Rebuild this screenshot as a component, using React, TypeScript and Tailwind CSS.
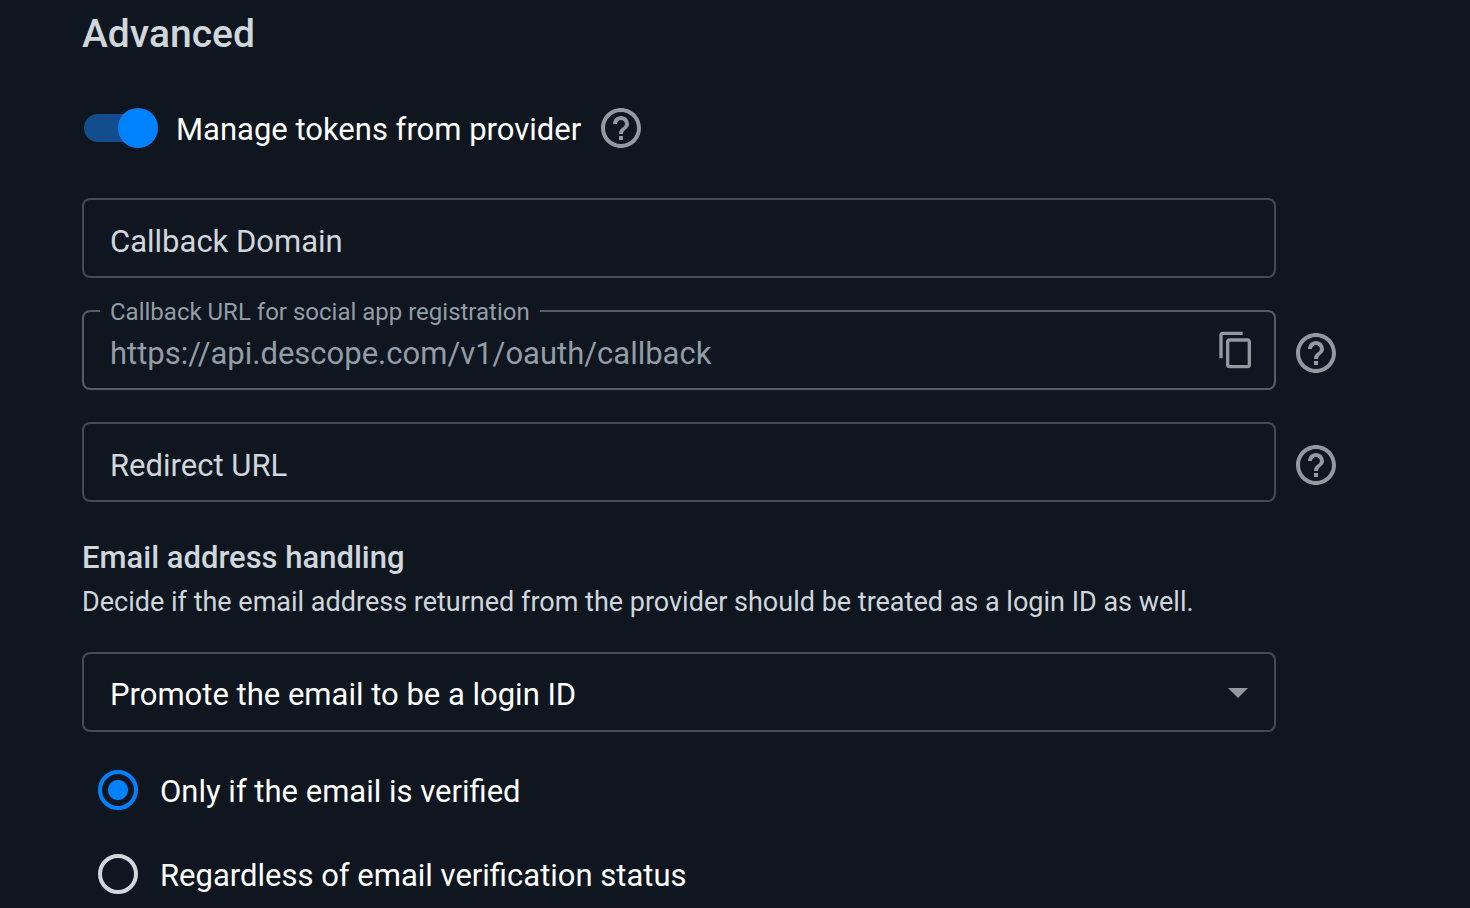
import type { ReactNode } from 'react'
import { MdArrowDropDown, MdContentCopy, MdHelpOutline } from 'react-icons/md'

const fieldClass =
  'block h-20 w-full rounded-lg border-2 bg-transparent px-[26px] pt-1.5 text-[31px] outline-none focus:border-[#0082ff]'

const radioClass =
  'size-10 shrink-0 appearance-none rounded-full border-4 border-[#cfd6dc] checked:border-[#0082ff] checked:bg-[radial-gradient(circle,#0082ff_9.5px,transparent_10.5px)]'

const HelpButton = ({ label }: { label: string }) => (
  <button type="button" aria-label={label} className="shrink-0 text-[#94989f]">
    <MdHelpOutline className="size-12" />
  </button>
)

const FieldRow = ({ children, help }: { children: ReactNode; help?: string }) => (
  <div className="flex items-center gap-4">
    <div className="relative flex-1">{children}</div>
    <div className="flex w-12 shrink-0 pt-1.5">{help && <HelpButton label={help} />}</div>
  </div>
)

const RadioOption = ({ label, checked }: { label: string; checked?: boolean }) => (
  <label className="flex items-center gap-[22px]">
    <input type="radio" name="verification" defaultChecked={checked} className={radioClass} />
    <span className="pt-1 text-[31px] leading-11">{label}</span>
  </label>
)

const App = () => (
  <main className="min-h-screen bg-[#0f1620] pt-2.5 pr-[130px] pl-[82px] font-['Roboto',sans-serif] text-white">
    <h1 className="text-[39px] leading-12 font-medium text-[#cfd6dc]">Advanced</h1>

    <div className="mt-[46px] flex items-center">
      <label className="flex items-center gap-[18px] pl-0.5">
        <input
          type="checkbox"
          role="switch"
          defaultChecked
          className="relative h-7 w-[74px] shrink-0 appearance-none before:absolute before:inset-y-0 before:left-0 before:w-[68px] before:rounded-full before:bg-[#454a54] after:absolute after:-top-1.5 after:left-0 after:size-10 after:rounded-full after:bg-[#cfd6dc] checked:before:bg-[#144d8e] checked:after:left-[34px] checked:after:bg-[#0082ff]"
        />
        <span className="pt-1 text-[31px] leading-11">Manage tokens from provider</span>
      </label>
      <div className="ml-4 flex">
        <HelpButton label="About provider tokens" />
      </div>
    </div>

    <div className="mt-[46px] flex flex-col gap-8">
      <FieldRow>
        <input
          type="text"
          aria-label="Callback Domain"
          placeholder="Callback Domain"
          className={`${fieldClass} border-[#454a54] placeholder:text-[#cfd6dc]`}
        />
      </FieldRow>
      <FieldRow help="About the callback URL">
        <label
          htmlFor="callback-url"
          className="absolute -top-4 left-[18px] bg-[#0f1620] px-2.5 pt-0.5 text-2xl leading-8 text-[#929da7]"
        >
          Callback URL for social app registration
        </label>
        <input
          id="callback-url"
          type="text"
          readOnly
          value="https://api.descope.com/v1/oauth/callback"
          className={`${fieldClass} border-[#565c66] text-[#929da7]`}
        />
        <button type="button" aria-label="Copy" className="absolute top-5 right-5 text-[#94989f]">
          <MdContentCopy className="size-10" />
        </button>
      </FieldRow>
      <FieldRow help="About the redirect URL">
        <input
          type="text"
          aria-label="Redirect URL"
          placeholder="Redirect URL"
          className={`${fieldClass} border-[#454a54] placeholder:text-[#cfd6dc]`}
        />
      </FieldRow>
    </div>

    <h2 className="mt-9 text-[31px] leading-10 font-medium text-[#cfd6dc]">Email address handling</h2>
    <p className="mt-1 mb-[30px] text-[27px] leading-10 text-[#cfd6dc]">
      Decide if the email address returned from the provider should be treated as a login ID as well.
    </p>

    <FieldRow>
      <select aria-label="Email address handling" className={`${fieldClass} appearance-none border-[#454a54]`}>
        <option>Promote the email to be a login ID</option>
      </select>
      <MdArrowDropDown className="pointer-events-none absolute top-4 right-3.5 size-12 text-[#94989f]" />
    </FieldRow>

    <div role="radiogroup" aria-label="Email verification" className="mt-[34px] flex flex-col gap-9 pb-2.5 pl-4">
      <RadioOption label="Only if the email is verified" checked />
      <RadioOption label="Regardless of email verification status" />
    </div>
  </main>
)

export default App
